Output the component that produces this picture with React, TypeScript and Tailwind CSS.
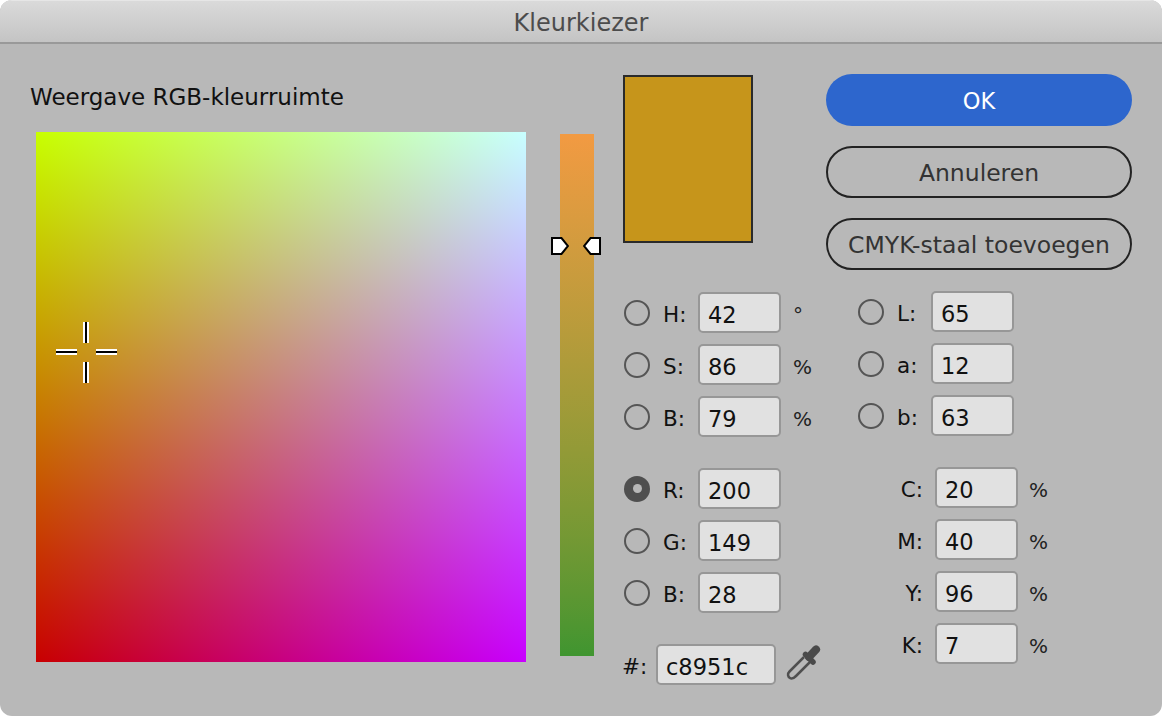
const font = "font-['DejaVu_Sans',sans-serif]";

function Radio({ on }: { on?: boolean }) {
  if (on) {
    return (
      <span className="flex h-[26px] w-[26px] shrink-0 items-center justify-center rounded-full bg-[#4f4f4f]">
        <span className="h-[9px] w-[9px] rounded-full bg-[#b8b8b8]" />
      </span>
    );
  }
  return <span className="h-[26px] w-[26px] shrink-0 rounded-full border-2 border-[#555555]" />;
}

function Field({ value, w = "w-[83px]" }: { value: string; w?: string }) {
  return (
    <div
      className={`flex h-[41px] ${w} items-center rounded-[5px] border-2 border-[#979797] bg-[#e1e1e1] pl-[8px] pt-[6px] text-[22.5px] leading-none text-[#111111]`}
    >
      {value}
    </div>
  );
}

function RadioRow({
  label,
  value,
  unit,
  on,
  labelW = "w-[48px]",
}: {
  label: string;
  value: string;
  unit?: string;
  on?: boolean;
  labelW?: string;
}) {
  return (
    <div className="flex h-[41px] items-center">
      <Radio on={on} />
      <span className={`${labelW} pl-[13px] pt-[6px] text-[21.5px] text-[#111111]`}>{label}</span>
      <Field value={value} />
      {unit && <span className="pl-[12px] pt-[4px] text-[20px] text-[#222222]">{unit}</span>}
    </div>
  );
}

function CmykRow({ label, value }: { label: string; value: string }) {
  return (
    <div className="flex h-[41px] items-center">
      <span className="w-[77px] pr-[12px] pt-[6px] text-right text-[21.5px] text-[#111111]">{label}</span>
      <Field value={value} />
      <span className="pl-[11px] pt-[4px] text-[20px] text-[#222222]">%</span>
    </div>
  );
}

function Thumb({ flip }: { flip?: boolean }) {
  return (
    <svg width="18" height="18" viewBox="0 0 18 18" className={flip ? "-scale-x-100" : ""}>
      <path d="M1 1H10.500L17 9L10.500 17H1Z" fill="#fff" stroke="#000" strokeWidth="2" />
    </svg>
  );
}

function Crosshair() {
  return (
    <div className="absolute left-[20px] top-[190px] h-[61px] w-[61px]">
      <span className="absolute left-[27px] top-0 h-[21px] w-[6px] border-x-2 border-white bg-black" />
      <span className="absolute left-[27px] bottom-0 h-[21px] w-[6px] border-x-2 border-white bg-black" />
      <span className="absolute left-0 top-[27px] h-[6px] w-[21px] border-y-2 border-white bg-black" />
      <span className="absolute right-0 top-[27px] h-[6px] w-[21px] border-y-2 border-white bg-black" />
    </div>
  );
}

function Dropper() {
  return (
    <svg width="36" height="38" viewBox="6 4 36 38" fill="none" className="mb-[3px]">
      <path
        d="M24 17L9.500 31.500C7 34 8 37 10 38C12 39.500 14 38 16 36L30 22"
        stroke="#4f4f4f"
        strokeWidth="2.500"
        strokeLinejoin="round"
      />
      <path d="M25.500 14.500L33 22" stroke="#4a4a4a" strokeWidth="5.500" strokeLinecap="round" />
      <path d="M29 17L36 9.500" stroke="#4a4a4a" strokeWidth="8" strokeLinecap="round" />
    </svg>
  );
}

export default function App() {
  return (
    <div className={`h-[716px] w-[1162px] overflow-hidden bg-[#ffffff] ${font}`}>
      <div className="flex h-full flex-col overflow-hidden rounded-[12px] bg-[#b8b8b8]">
        <div className="flex h-[44px] shrink-0 items-center justify-center border-t border-b-2 border-t-[#e6e6e6] border-b-[#999999] bg-gradient-to-b from-[#dadada] to-[#c4c4c4] pt-[2px] text-[24px] text-[#4c4c4c]">
          Kleurkiezer
        </div>

        <div className="flex flex-1 items-start pl-[30px]">
          <div className="w-[530px] shrink-0 pt-[39px]">
            <h1 className="h-[49px] text-[23px] leading-[28px] font-normal text-[#111111]">Weergave RGB-kleurruimte</h1>
            <div className="relative ml-[6px] h-[530px] w-[490px] bg-[#c80000] bg-[linear-gradient(to_right,#000000,#0000ff),linear-gradient(to_bottom,#00ff00,#000000)] bg-blend-screen">
              <Crosshair />
            </div>
          </div>

          <div className="relative mt-[90px] h-[522px] w-[34px] shrink-0 bg-gradient-to-b from-[#f29a42] to-[#3f9530]">
            <div className="absolute left-[-9px] right-[-7px] top-[103px] flex justify-between">
              <Thumb />
              <Thumb flip />
            </div>
          </div>

          <div className="ml-[29px] w-[509px] shrink-0 pt-[30px]">
            <div className="flex items-start">
              <div className="mt-[1px] h-[168px] w-[130px] shrink-0 border-2 border-[#2a2a2a] bg-[#c6951b]" />
              <div className="ml-[73px] flex w-[306px] flex-col gap-[20px] text-[23.5px]">
                <button className="h-[52px] rounded-full bg-[#2d66cd] pt-[4px] text-[22.5px] text-white">OK</button>
                <button className="h-[52px] rounded-full border-2 border-[#222222] pt-[4px] text-[#333333]">Annuleren</button>
                <button className="h-[52px] rounded-full border-2 border-[#222222] pt-[4px] text-[#333333]">CMYK-staal toevoegen</button>
              </div>
            </div>

            <div className="mt-[22px] flex">
              <div className="w-[235px] shrink-0">
                <div className="flex flex-col gap-[11px] pl-[1px]">
                  <RadioRow label="H:" value="42" unit="°" />
                  <RadioRow label="S:" value="86" unit="%" />
                  <RadioRow label="B:" value="79" unit="%" />
                </div>
                <div className="mt-[31px] flex flex-col gap-[11px] pl-[1px]">
                  <RadioRow label="R:" value="200" on />
                  <RadioRow label="G:" value="149" />
                  <RadioRow label="B:" value="28" />
                </div>
                <div className="mt-[31px] -ml-[1px] flex h-[41px] items-center">
                  <span className="w-[34px] pt-[6px] text-[21.5px] text-[#111111]">#:</span>
                  <Field value="c8951c" w="w-[120px]" />
                  <span className="ml-[10px] flex">
                    <Dropper />
                  </span>
                </div>
              </div>

              <div className="-mt-[1px]">
                <div className="flex flex-col gap-[11px]">
                  <RadioRow label="L:" value="65" labelW="w-[47px]" />
                  <RadioRow label="a:" value="12" labelW="w-[47px]" />
                  <RadioRow label="b:" value="63" labelW="w-[47px]" />
                </div>
                <div className="mt-[31px] flex flex-col gap-[11px]">
                  <CmykRow label="C:" value="20" />
                  <CmykRow label="M:" value="40" />
                  <CmykRow label="Y:" value="96" />
                  <CmykRow label="K:" value="7" />
                </div>
              </div>
            </div>
          </div>
        </div>
      </div>
    </div>
  );
}
